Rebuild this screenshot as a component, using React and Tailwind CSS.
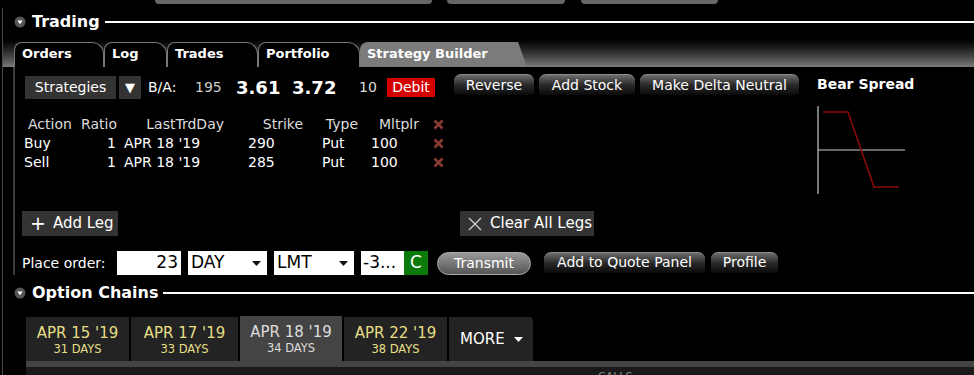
import React from 'react';

const font = { fontFamily: '"DejaVu Sans", "Liberation Sans", sans-serif' };

const TopTab = ({ w, ml }) => (
    <div className={`h-[4px] rounded-b-[4px] bg-[#666] ${w} ${ml}`} />
);

const Collapse = () => (
    <svg width="12" height="12" viewBox="0 0 12 12" className="shrink-0">
        <circle cx="6" cy="6" r="5.5" fill="#555" />
        <path d="M3.3 4.5 L8.7 4.5 L6 8.2 Z" fill="#fff" />
    </svg>
);

const SectionTitle = ({ label, className }) => (
    <div className={`flex items-center ${className}`}>
        <div className="ml-[14px] mr-[6px]"><Collapse /></div>
        <span className="text-[16px] font-bold text-white leading-none">{label}</span>
        <div className="flex-1 h-[2px] bg-white ml-[5px]" />
    </div>
);

const Tab = ({ label, w, active }) => (
    <div
        className={`relative h-[25px] flex items-end pb-[4px] pl-[7px] text-[13px] font-bold text-white ${w} ${active ? 'bg-[#7b7b7b] rounded-tl-[8px] [clip-path:polygon(0_0,calc(100%-9px)_0,100%_100%,0_100%)]' : 'bg-black border border-b-0 border-[#777] rounded-tl-[8px] rounded-tr-[12px]'}`}
    >
        {label}
    </div>
);

const GlossBtn = ({ label, w }) => (
    <div className={`h-[21px] shrink-0 rounded-t-[7px] rounded-b-[3px] bg-gradient-to-b from-[#6e6e6e] via-[#2a2a2a] to-[#0a0a0a] border-t border-[#8a8a8a] flex items-center justify-center text-[14px] text-white ${w}`}>
        {label}
    </div>
);

const RedX = () => (
    <svg width="11" height="11" viewBox="0 0 11 11">
        <path d="M1.5 1.5 L9.5 9.5 M9.5 1.5 L1.5 9.5" stroke="#8c3b34" strokeWidth="2.6" />
    </svg>
);

const legs = [
    { action: 'Buy', ratio: 1, day: "APR 18 '19", strike: 290, type: 'Put', mult: 100 },
    { action: 'Sell', ratio: 1, day: "APR 18 '19", strike: 285, type: 'Put', mult: 100 },
];

const Select = ({ label, w }) => (
    <div className={`h-[24px] shrink-0 bg-white text-black text-[17px] flex items-center justify-between pl-[3px] pr-[6px] ${w}`}>
        <span>{label}</span>
        <svg width="9" height="5" viewBox="0 0 9 5"><path d="M0 0 L9 0 L4.5 5 Z" fill="#111" /></svg>
    </div>
);

const expiries = [
    { d: "APR 15 '19", n: '31 DAYS', w: 'w-[103px]' },
    { d: "APR 17 '19", n: '33 DAYS', w: 'w-[107px]' },
    { d: "APR 18 '19", n: '34 DAYS', w: 'w-[102px]', active: true },
    { d: "APR 22 '19", n: '38 DAYS', w: 'w-[103px]' },
];

export default function App() {
    return (
        <div className="w-[974px] h-[375px] bg-black overflow-hidden" style={font}>
            {/* top strip */}
            <div className="h-[8px] flex">
                <TopTab w="w-[277px]" ml="ml-[155px]" />
                <TopTab w="w-[118px]" ml="ml-[15px]" />
                <TopTab w="w-[137px]" ml="ml-[16px]" />
            </div>

            <div className="ml-[2px] border-l border-[#4a4a4a] h-[367px]">
                <SectionTitle label="Trading" className="h-[27px] -ml-[3px]" />

                {/* tab band */}
                <div className="h-[32px] bg-gradient-to-b from-black to-[#7a7a7a] flex items-end pl-[11px]">
                    <Tab label="Orders" w="w-[90px]" />
                    <Tab label="Log" w="w-[63px]" />
                    <Tab label="Trades" w="w-[91px]" />
                    <Tab label="Portfolio" w="w-[102px]" />
                    <Tab label="Strategy Builder" w="w-[167px]" active />
                </div>

                {/* strategy builder body */}
                <div className="flex">
                    <div className="ml-[10px] border-l-2 border-[#3a3a3a] w-[790px] h-[208px] pl-[10px]">
                        <div className="flex items-start mt-[7px] text-white">
                            <div className="mt-[2px] h-[23px] w-[91px] shrink-0 bg-[#333] flex items-center justify-center text-[14px]">Strategies</div>
                            <div className="mt-[2px] ml-[3px] h-[23px] w-[22px] shrink-0 bg-[#333] flex items-center justify-center text-[13px]">▼</div>
                            <div className="mt-[2px] h-[23px] w-[313px] shrink-0 flex items-center text-[14px]">
                                <span className="ml-[7px] w-[47px]">B/A:</span>
                                <span className="w-[41px] text-[#ccc]">195</span>
                                <span className="w-[56px] text-[18px] font-bold">3.61</span>
                                <span className="w-[67px] text-[18px] font-bold">3.72</span>
                                <span className="w-[28px] text-[#ddd]">10</span>
                                <span className="bg-[#d40000] w-[48px] justify-center h-[19px] flex items-center">Debit</span>
                            </div>
                            <div className="flex gap-[5px]">
                                <GlossBtn label="Reverse" w="w-[80px]" />
                                <GlossBtn label="Add Stock" w="w-[96px]" />
                                <GlossBtn label="Make Delta Neutral" w="w-[159px]" />
                            </div>
                        </div>

                        {/* legs table */}
                        <div className="mt-[16px] -ml-[1px] text-[14px]">
                            <div className="flex h-[19px] items-center text-[#ddd]">
                                <span className="w-[50px] pl-[4px]">Action</span>
                                <span className="w-[43px] text-right">Ratio</span>
                                <span className="w-[107px] text-right">LastTrdDay</span>
                                <span className="w-[79px] text-right">Strike</span>
                                <span className="w-[55px] text-right">Type</span>
                                <span className="w-[61px] text-right">Mltplr</span>
                                <span className="w-[25px] flex justify-end"><RedX /></span>
                            </div>
                            {legs.map(l => (
                                <div key={l.action} className="flex h-[19px] items-center text-white">
                                    <span className="w-[75px]">{l.action}</span>
                                    <span className="w-[17px] text-right">{l.ratio}</span>
                                    <span className="w-[128px] pl-[8px]">{l.day}</span>
                                    <span className="w-[75px] pl-[4px]">{l.strike}</span>
                                    <span className="w-[50px] pl-[3px]">{l.type}</span>
                                    <span className="w-[60px] pl-[2px]">{l.mult}</span>
                                    <span className="w-[15px] flex justify-end"><RedX /></span>
                                </div>
                            ))}
                        </div>

                        <div className="flex mt-[39px] -ml-[3px] text-white text-[15px]">
                            <div className="h-[25px] w-[96px] bg-[#333] flex items-center pl-[8px] gap-[7px]">
                                <span className="text-[19px] leading-none">+</span>
                                <span>Add Leg</span>
                            </div>
                            <div className="ml-[342px] h-[25px] w-[134px] bg-[#333] flex items-center pl-[8px] gap-[8px]">
                                <svg width="14" height="14" viewBox="0 0 14 14"><path d="M1 1 L13 13 M13 1 L1 13" stroke="#ccc" strokeWidth="1.4" /></svg>
                                <span>Clear All Legs</span>
                            </div>
                        </div>

                        <div className="flex items-center mt-[15px] -ml-[3px] text-white">
                            <span className="text-[14px] w-[95px] shrink-0">Place order:</span>
                            <div className="h-[24px] w-[64px] shrink-0 bg-white text-black text-[17px] flex items-center justify-end pr-[3px]">23</div>
                            <div className="ml-[7px]"><Select label="DAY" w="w-[79px]" /></div>
                            <div className="ml-[7px]"><Select label="LMT" w="w-[80px]" /></div>
                            <div className="ml-[7px] h-[24px] w-[43px] shrink-0 bg-white text-black text-[17px] flex items-center pl-[2px]">-3...</div>
                            <div className="h-[24px] w-[24px] shrink-0 bg-[#0a7a0a] text-white text-[17px] flex items-center justify-center">C</div>
                            <div className="ml-[9px] h-[23px] w-[94px] shrink-0 rounded-full bg-gradient-to-b from-[#9a9a9a] to-[#555] border border-[#aaa] flex items-center justify-center text-[14px]">Transmit</div>
                            <div className="ml-[13px] -mt-[2px] flex gap-[6px]">
                                <GlossBtn label="Add to Quote Panel" w="w-[161px]" />
                                <GlossBtn label="Profile" w="w-[67px]" />
                            </div>
                        </div>
                    </div>

                    {/* payoff diagram */}
                    <div className="ml-[14px] pt-[7px]">
                        <div className="text-[14px] font-bold text-white">Bear Spread</div>
                        <svg width="92" height="90" viewBox="0 0 92 90" className="mt-[11px]">
                            <line x1="1" y1="0" x2="1" y2="88" stroke="#eee" strokeWidth="1" />
                            <line x1="1" y1="44" x2="88" y2="44" stroke="#ccc" strokeWidth="1.2" />
                            <path d="M6 6 L31 6 L57 81 L82 81" fill="none" stroke="#8b0a0a" strokeWidth="1.6" />
                        </svg>
                    </div>
                </div>

                <SectionTitle label="Option Chains" className="h-[26px] mt-[5px] -ml-[3px]" />

                {/* expiry tabs */}
                <div className="flex items-end gap-[2px] ml-[23px] mt-[10px] h-[45px]">
                    {expiries.map(e => (
                        <div key={e.d} className={`${e.w} flex flex-col items-center justify-center pt-[1px] ${e.active ? 'h-[45px] bg-[#444] text-[#ddd]' : 'h-[44px] bg-[#232323] text-[#e6df86]'}`}>
                            <span className="text-[15px] leading-[18px]">{e.d}</span>
                            <span className="text-[11.5px] leading-[14px]">{e.n}</span>
                        </div>
                    ))}
                    <div className="w-[84px] h-[44px] bg-[#232323] rounded-tr-[4px] text-white text-[15px] flex items-center pl-[11px] gap-[9px]">
                        MORE
                        <svg width="9" height="5" viewBox="0 0 9 5"><path d="M0 0 L9 0 L4.5 5 Z" fill="#fff" /></svg>
                    </div>
                </div>
                <div className="ml-[23px] h-[6px] bg-[#444]" />
                <div className="ml-[23px] h-[8px] bg-[#1a1a1a] overflow-hidden">
                    <div className="ml-[572px] mt-[4px] text-[11px] text-[#888] leading-none">CALLS</div>
                </div>
            </div>
        </div>
    );
}
